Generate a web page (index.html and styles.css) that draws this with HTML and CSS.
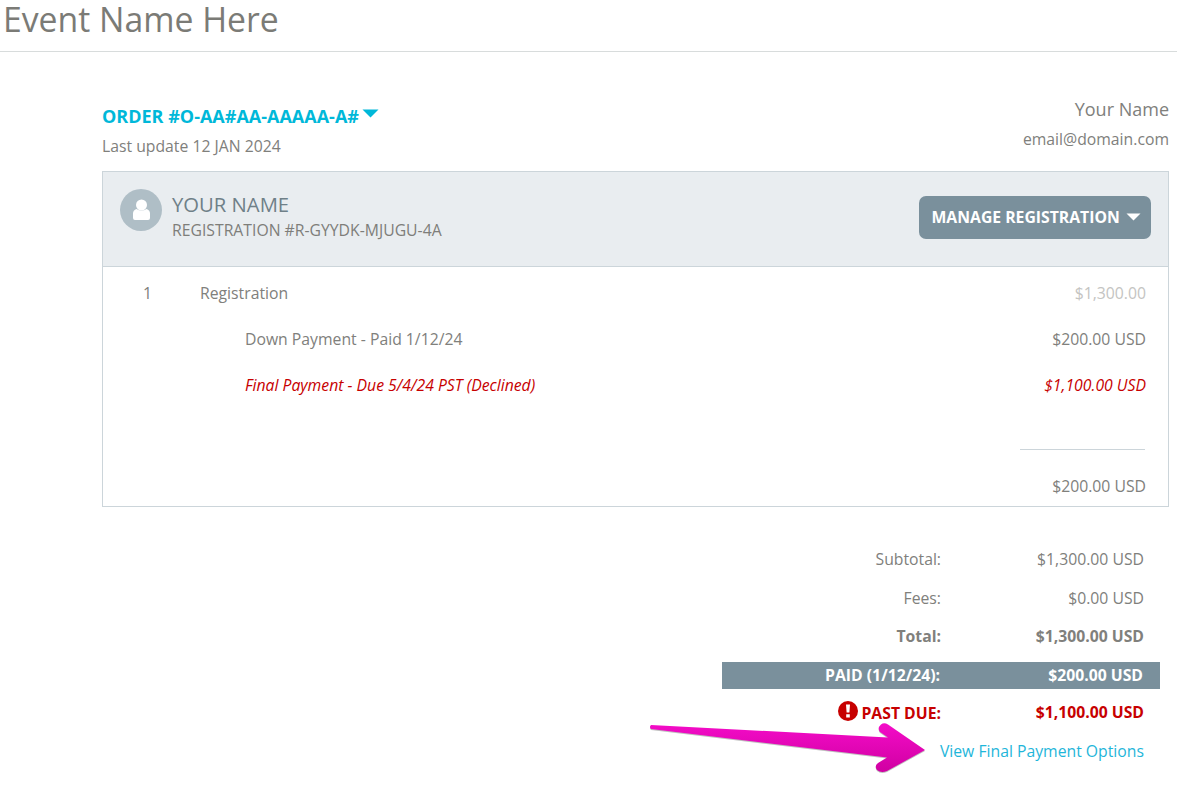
FILE: index.html
```html
<!DOCTYPE html>
<html lang="en">
<head>
<meta charset="utf-8">
<title>Event Name Here</title>
<link rel="stylesheet" href="styles.css">
</head>
<body>
<header class="page-header"><h1 class="event-title">Event Name Here</h1></header>
<main class="content">
  <section class="order-top">
    <div>
      <div class="order-id">ORDER #O-AA#AA-AAAAA-A# <svg class="order-caret" width="17" height="9" viewBox="0 0 17 9"><path d="M0.5 0.5H16.5L8.5 8.5Z" fill="#00b8d9"/></svg></div>
      <div class="order-date">Last update 12 JAN 2024</div>
    </div>
    <div class="buyer">
      <div class="buyer-name">Your Name</div>
      <div class="buyer-email">email@domain.com</div>
    </div>
  </section>
  <section class="card">
    <div class="card-head">
      <div class="person">
        <svg class="avatar" width="42" height="42" viewBox="0 0 42 42"><circle cx="21" cy="21" r="21" fill="#afbec6"/><circle cx="21.5" cy="16" r="5.5" fill="#fff"/><path d="M13 29v-4.500q0-3.500 3.500-4.500q5 3 10 0q3.500 1 3.500 4.500V29q0 2-2 2H15q-2 0-2-2Z" fill="#fff"/></svg>
        <div>
          <div class="person-name">YOUR NAME</div>
          <div class="person-reg">REGISTRATION #R-GYYDK-MJUGU-4A</div>
        </div>
      </div>
      <div class="manage-btn">MANAGE REGISTRATION <svg width="15" height="8" viewBox="0 0 15 8"><path d="M0.500 0.500H14.500L7.500 7.500Z" fill="#fff"/></svg></div>
    </div>
    <div class="card-body">
      <div class="line line-main"><span class="qty">1</span><span class="line-label">Registration</span><span class="price-muted">$1,300.00</span></div>
      <div class="line line-sub"><span class="line-label">Down Payment - Paid 1/12/24</span><span>$200.00 USD</span></div>
      <div class="line line-sub line-declined"><span class="line-label">Final Payment - Due 5/4/24 PST (Declined)</span><span>$1,100.00 USD</span></div>
      <div class="card-rule"></div>
      <div class="card-total">$200.00 USD</div>
    </div>
  </section>
  <section class="totals">
    <div class="total-row row-sub"><span class="total-label">Subtotal:</span><span class="total-value">$1,300.00 USD</span></div>
    <div class="total-row row-fees"><span class="total-label">Fees:</span><span class="total-value">$0.00 USD</span></div>
    <div class="total-row row-total"><span class="total-label">Total:</span><span class="total-value">$1,300.00 USD</span></div>
    <div class="total-row row-paid"><span class="total-label">PAID (1/12/24):</span><span class="total-value">$200.00 USD</span></div>
    <div class="total-row row-due"><span class="total-label"><svg class="alert" width="20" height="20" viewBox="0 0 20 20"><circle cx="10" cy="10" r="10" fill="#c70000"/><path d="M8 3.500h4l-.6 8h-2.800ZM8.200 13.200h3.600v3.300H8.200Z" fill="#fff"/></svg> PAST DUE:</span><span class="total-value">$1,100.00 USD</span></div>
    <div class="total-row row-link"><a class="pay-link" href="#">View Final Payment Options</a></div>
  </section>
</main>
<svg class="arrow" width="1181" height="785" viewBox="0 0 1181 785">
  <defs>
    <linearGradient id="arrowfill" x1="0" y1="0" x2="0" y2="1"><stop offset="0" stop-color="#f40cc8"/><stop offset="1" stop-color="#d000a2"/></linearGradient>
  </defs>
  <path d="M651 725L888 737.500L880 732Q877 728 881 724.500Q884 722 888 724.500L925 750L887 771Q881 773.500 877 770Q874 766 878 763L887 757.500L651 729Q649 727 651 725Z" fill="#8a8a8a" opacity="0.55" transform="translate(0 1)"/>
  <path d="M651 725L888 737.500L880 732Q877 728 881 724.500Q884 722 888 724.500L925 750L887 771Q881 773.500 877 770Q874 766 878 763L887 757.500L651 729Q649 727 651 725Z" fill="url(#arrowfill)"/>
</svg>
</body>
</html>
```

FILE: styles.css
```css
* { box-sizing: border-box; }
html, body { margin: 0; padding: 0; }
body {
  width: 1177px;
  height: 785px;
  overflow: hidden;
  position: relative;
  background: #fff;
  color: #80807c;
  font-family: "Open Sans", "Liberation Sans", sans-serif;
  font-size: 15.75px;
}
.page-header { height: 52px; border-bottom: 1px solid #d8dcdc; padding-left: 3px; }
.event-title { margin: 0; font-size: 33.75px; line-height: 38px; font-weight: 400; color: #7b7b76; }
.content { padding: 0 8px 0 102px; }
.order-top { display: flex; justify-content: space-between; height: 119px; padding-top: 46px; }
.order-id { color: #00b8d9; font-size: 18px; font-weight: 700; line-height: 36px; height: 36px; white-space: nowrap; }
.order-caret { vertical-align: 5px; margin-left: -2px; }
.order-date { line-height: 24px; }
.buyer { text-align: right; margin-top: -4px; }
.buyer-name { font-size: 18px; line-height: 30px; }
.buyer-email { line-height: 30px; }
.card { border: 1px solid #ccd5da; height: 336px; }
.card-head { height: 95px; background: #e9edf0; border-bottom: 1px solid #ccd5da; display: flex; justify-content: space-between; align-items: flex-start; padding: 17px 17px 0; }
.person { display: flex; gap: 10px; align-items: flex-start; }
.avatar { display: block; }
.person-name { font-size: 20.25px; line-height: 28px; color: #6f8088; margin-top: 1px; }
.person-reg { line-height: 24px; color: #7e7e7a; }
.manage-btn { background: #7a909c; color: #fff; font-weight: 700; font-size: 15.75px; height: 43px; width: 232px; margin-top: 7px; padding-left: 12.500px; line-height: 42px; border-radius: 7px; white-space: nowrap; }
.manage-btn svg { vertical-align: 2px; margin-left: 2px; }
.card-body { padding: 0 22px 0 0; }
.line { display: flex; justify-content: space-between; height: 46px; line-height: 24px; padding-top: 14px; }
.line-main { padding-left: 40px; }
.qty { width: 57px; flex: none; }
.line-main .line-label { flex: 1; }
.price-muted { color: #c4c4c2; }
.line-sub { padding-left: 142px; }
.line-declined { color: #c70000; font-style: italic; }
.card-rule { height: 1px; width: 125px; margin: 44px 1px 0 auto; background: #ccd5da; }
.card-total { text-align: right; line-height: 24px; margin-top: 24px; }
.totals { margin-top: 32px; }
.total-row { display: flex; justify-content: flex-end; align-items: center; padding-right: 25px; white-space: nowrap; }
.total-label { text-align: right; flex: 1; }
.total-value { width: 203px; text-align: right; }
.row-sub { height: 39px; }
.row-fees { height: 39px; }
.row-total { height: 38px; font-weight: 700; }
.row-paid { height: 27px; margin: 7px 9px 0 620px; background: #7a909c; color: #fff; font-weight: 700; padding-right: 17px; padding-bottom: 2px; }
.row-due { height: 46px; color: #c70000; font-weight: 700; }
.alert { vertical-align: -2px; margin-right: -1px; }
.row-link { height: 32px; align-items: flex-start; padding-top: 4px; }
.pay-link { color: #1fb6da; text-decoration: none; line-height: 24px; }
.arrow { position: absolute; left: 0; top: 0; pointer-events: none; }
```
